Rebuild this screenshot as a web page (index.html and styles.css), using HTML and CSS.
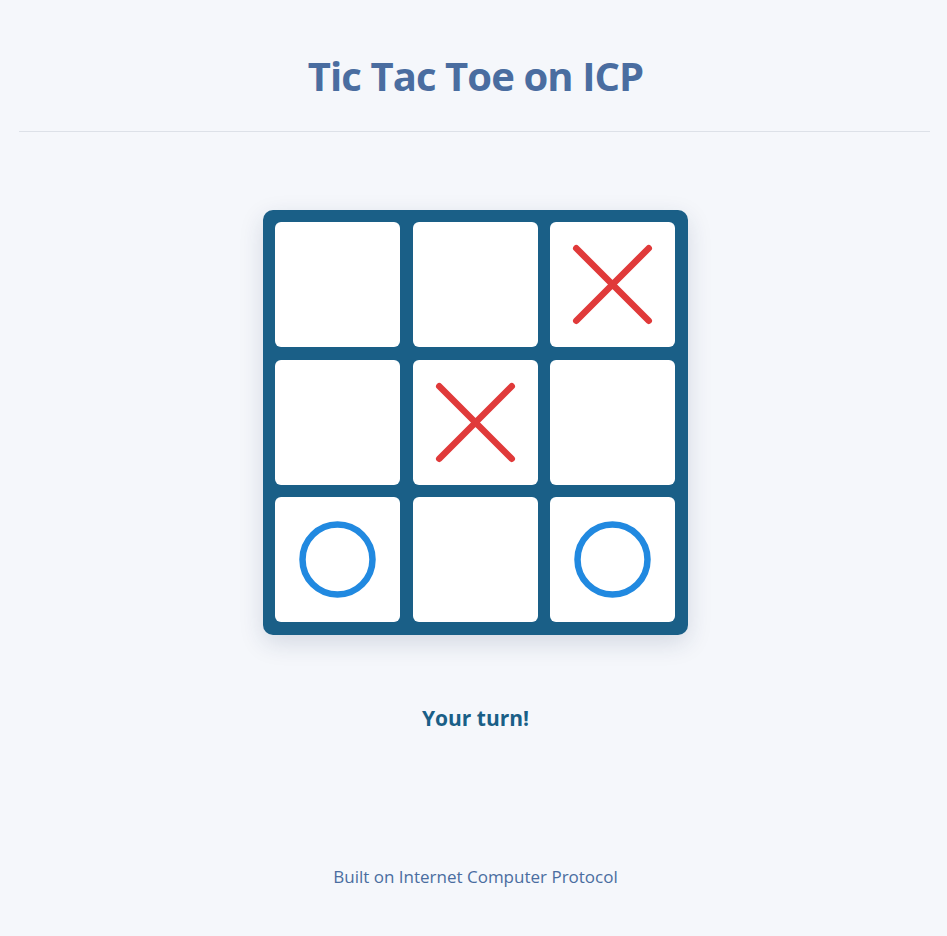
FILE: index.html
```html
<!DOCTYPE html>
<html lang="en">
<head>
<meta charset="utf-8">
<title>Tic Tac Toe on ICP</title>
<link rel="stylesheet" href="styles.css">
</head>
<body>
<div class="app">
  <header class="header">
    <h1 class="title">Tic Tac Toe on ICP</h1>
  </header>
  <main class="main">
    <div class="board">
      <div class="cell"></div>
      <div class="cell"></div>
      <div class="cell"><svg class="mark" viewBox="0 0 100 100"><path class="x" d="M21 21 L79 79 M79 21 L21 79"/></svg></div>
      <div class="cell"></div>
      <div class="cell"><svg class="mark" viewBox="0 0 100 100"><path class="x" d="M21 21 L79 79 M79 21 L21 79"/></svg></div>
      <div class="cell"></div>
      <div class="cell"><svg class="mark" viewBox="0 0 100 100"><circle class="o" cx="50" cy="50" r="28"/></svg></div>
      <div class="cell"></div>
      <div class="cell"><svg class="mark" viewBox="0 0 100 100"><circle class="o" cx="50" cy="50" r="28"/></svg></div>
    </div>
    <p class="status">Your turn!</p>
  </main>
  <footer class="footer">Built on Internet Computer Protocol</footer>
</div>
</body>
</html>
```

FILE: styles.css
```css
html, body {
  margin: 0;
  padding: 0;
  background: #f5f7fb;
}
body {
  font-family: "Open Sans", "Noto Sans", sans-serif;
}
.app {
  padding: 0 17px 0 19px;
  display: flex;
  flex-direction: column;
}
.header {
  padding: 52px 0 31px;
  border-bottom: 1px solid #dde1e8;
  text-align: center;
}
.title {
  margin: 0 0 0 2px;
  font-size: 40px;
  line-height: 48px;
  font-weight: 700;
  color: #4a6da0;
  letter-spacing: -0.9px;
}
.main {
  display: flex;
  flex-direction: column;
  align-items: center;
  padding-top: 78px;
  padding-left: 2px;
}
.board {
  width: 425px;
  height: 425px;
  box-sizing: border-box;
  padding: 12px 13px 13px 12px;
  background: #1a5f87;
  border-radius: 10px;
  display: grid;
  grid-template-columns: repeat(3, 1fr);
  grid-template-rows: repeat(3, 1fr);
  gap: 12.5px;
  box-shadow: 0 8px 24px rgba(30, 50, 90, 0.15);
}
.cell {
  background: #ffffff;
  border-radius: 6px;
  display: flex;
  align-items: center;
  justify-content: center;
}
.mark {
  width: 125px;
  height: 125px;
}
.x {
  stroke: #e03a3a;
  stroke-width: 5.2;
  stroke-linecap: round;
  fill: none;
}
.o {
  stroke: #2189e0;
  stroke-width: 5.2;
  fill: none;
}
.status {
  margin: 68px 0 0;
  font-size: 21px;
  line-height: 30px;
  font-weight: 700;
  color: #1a5f87;
}
.footer {
  margin-top: 132px;
  text-align: center;
  font-size: 17px;
  line-height: 24px;
  color: #4a6da0;
  padding-left: 2px;
}
```
